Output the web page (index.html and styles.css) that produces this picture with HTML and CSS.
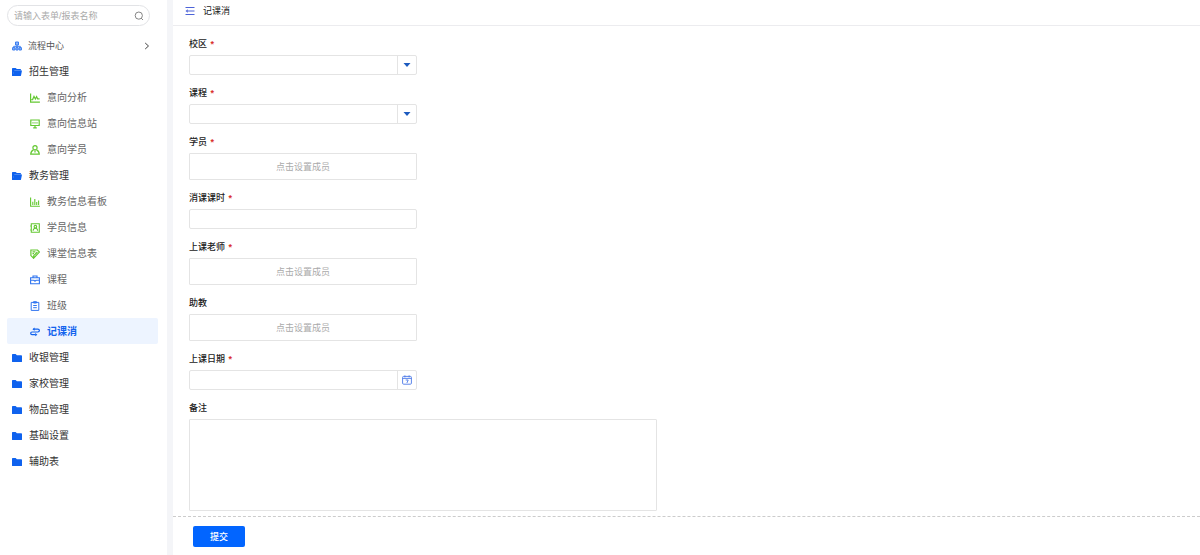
FILE: index.html
```html
<!DOCTYPE html>
<html lang="zh-CN">
<head>
	<meta charset="UTF-8">
	<meta name="viewport" content="width=device-width, initial-scale=1.0">
	<title>记课消</title>
	<link rel="stylesheet" href="styles.css">
</head>
<body>
	<!-- shared folder shapes -->
	<svg class="sprite" aria-hidden="true">
		<symbol id="folder" viewBox="0 0 10 9">
			<path d="M0 1.2Q0 .5.7.5H3.6L4.9 1.8H9.2Q10 1.8 10 2.5V7.9Q10 8.6 9.3 8.6H.7Q0 8.6 0 7.9Z" fill="#0f62ee"/>
		</symbol>
		<symbol id="folder-open" viewBox="0 0 10 9">
			<path d="M0 1.2Q0 .5.7.5H3.6L4.9 1.6H8.3Q9 1.6 9 2.3V3H2.4L1 7.6 1.5 8.6H.7Q0 8.6 0 7.9Z" fill="#0f62ee"/>
			<path d="M2.1 2.9H10L9 8Q8.9 8.6 8.3 8.6H.5Z" fill="#0f62ee"/>
		</symbol>
	</svg>

	<aside class="sidebar">
		<form class="search" role="search">
			<input class="search-input" type="search" aria-label="搜索表单" placeholder="请输入表单/报表名称">
			<button class="search-btn" type="submit" aria-label="搜索">
				<svg class="icon" viewBox="0 0 10 10" fill="none" stroke="#777" stroke-width=".9"><circle cx="4.8" cy="4.6" r="3.6"/><path d="M7.2 7.2L9 9"/></svg>
			</button>
		</form>

		<nav class="menu">
			<a class="menu-item center" href="#flow">
				<svg class="icon" viewBox="0 0 10 10" fill="#8db6f7" stroke="#3a7df0" stroke-width="1"><path d="M3.5 1H6.5V4H3.5ZM.6 6.6H2.9V9H.6ZM3.9 6.6H6.1V9H3.9ZM7.1 6.6H9.4V9H7.1Z"/><path d="M5 4V6.6M1.7 6.6V5.3H8.3V6.6" fill="none"/></svg>
				<span>流程中心</span>
				<svg class="arrow" viewBox="0 0 6 8" fill="none" stroke="#444" stroke-width="1"><path d="M1.2 1L4.5 4 1.2 7"/></svg>
			</a>
			<a class="menu-item" href="#recruit"><svg class="icon"><use href="#folder-open"/></svg><span>招生管理</span></a>
			<ul class="submenu">
				<li><a class="menu-item" href="#analysis">
					<svg class="icon" viewBox="0 0 10 10" fill="none" stroke="#64c832" stroke-width="1.2"><path d="M.6.5V9.2H9.9M1.4 6.6H2.6L4 3.4 5.4 6 6.6 3.6 7.6 5.8H9.6"/></svg>
					<span>意向分析</span></a></li>
				<li><a class="menu-item" href="#station">
					<svg class="icon" viewBox="0 0 10 10" fill="none" stroke="#64c832" stroke-width="1.2"><path d="M.8 1H9.2V6.5H.8ZM3 3.2V4.4M5 3.2V4.4M7 3.2V4.4M5 6.5V8.8M3.2 8.8H6.8"/></svg>
					<span>意向信息站</span></a></li>
				<li><a class="menu-item" href="#leads">
					<svg class="icon" viewBox="0 0 10 10" fill="none" stroke="#64c832" stroke-width="1.2"><circle cx="5" cy="2.7" r="2.1"/><path d="M3.6 4.6Q.9 6 .7 9.2H9.3Q9.1 6 6.4 4.6M5 5.3V7.4"/></svg>
					<span>意向学员</span></a></li>
			</ul>
			<a class="menu-item" href="#academic"><svg class="icon"><use href="#folder-open"/></svg><span>教务管理</span></a>
			<ul class="submenu">
				<li><a class="menu-item" href="#board">
					<svg class="icon" viewBox="0 0 10 10" fill="none" stroke="#64c832" stroke-width="1.1"><path d="M.6.5V9.2H9.9M2.8 4.8V8M4.8 2V8M6.7 5V8M8.6 3.6V8"/></svg>
					<span>教务信息看板</span></a></li>
				<li><a class="menu-item" href="#students">
					<svg class="icon" viewBox="0 0 10 10" fill="none" stroke="#64c832" stroke-width="1.1"><path d="M1.3.7H9.3V9.3H1.3ZM.2 3H1.8M.2 7H1.8"/><circle cx="5.4" cy="3.7" r="1.3"/><path d="M3.1 7.8Q3.4 5.3 5.4 5.3T7.7 7.8"/></svg>
					<span>学员信息</span></a></li>
				<li><a class="menu-item" href="#classroom">
					<svg class="icon" viewBox="0 0 10 10" fill="none" stroke="#64c832" stroke-width="1.2"><path d="M3.4 9L.9 6.6V1H7.5L9.4 3.1 3.7 9.1V6.7L7.4 3M2.5 2.9H5.4M2.5 4.7H4"/></svg>
					<span>课堂信息表</span></a></li>
				<li><a class="menu-item" href="#course">
					<svg class="icon" viewBox="0 0 10 10" fill="none" stroke="#2f74f0" stroke-width="1.1"><path d="M.6 2.7H9.4V8.8H.6ZM3 2.7V1H7V2.7M.6 5.2H3.8M6.2 5.2H9.4M3.8 5.2L5 6.2 6.2 5.2"/></svg>
					<span>课程</span></a></li>
				<li><a class="menu-item" href="#class">
					<svg class="icon" viewBox="0 0 10 10" fill="none" stroke="#2f74f0" stroke-width="1"><path d="M1.2 1.4H8.8V9.4H1.2ZM3.5.7H6.5V2H3.5ZM3.2 4.5H6.8M3.2 6.7H6.8"/></svg>
					<span>班级</span></a></li>
				<li><a class="menu-item active" href="#record" aria-current="page">
					<svg class="icon" viewBox="0 0 10 10" fill="none" stroke="#1263ee" stroke-width="1.2"><path d="M3.6 2.2H7.8Q9.4 2.2 9.4 3.6T7.8 5H2Q.7 5 .7 6.3T2 7.7H5.4"/><path d="M4.6.6V3.8L2.4 2.2ZM5.2 6.1V9.3L7.4 7.7Z" fill="#1263ee" stroke="none"/></svg>
					<span>记课消</span></a></li>
			</ul>
			<a class="menu-item" href="#cashier"><svg class="icon"><use href="#folder"/></svg><span>收银管理</span></a>
			<a class="menu-item" href="#family"><svg class="icon"><use href="#folder"/></svg><span>家校管理</span></a>
			<a class="menu-item" href="#goods"><svg class="icon"><use href="#folder"/></svg><span>物品管理</span></a>
			<a class="menu-item" href="#settings"><svg class="icon"><use href="#folder"/></svg><span>基础设置</span></a>
			<a class="menu-item" href="#aux"><svg class="icon"><use href="#folder"/></svg><span>辅助表</span></a>
		</nav>
	</aside>

	<main class="main">
		<header class="header">
			<button class="collapse" type="button" aria-label="收起菜单">
				<svg class="icon" viewBox="0 0 10 10" fill="none" stroke="#4c63d8" stroke-width="1"><path d="M.5 1.5H9.5M3 5H9.5M.5 8.5H9.5"/><path d="M2.8 3.3V6.7L.5 5Z" fill="#4c63d8" stroke="none"/></svg>
			</button>
			<h1 class="title">记课消</h1>
		</header>

		<form class="form" id="recordForm">
			<div class="field">
				<label for="campus">校区 <span class="required">*</span></label>
				<div class="control">
					<select id="campus"><option></option></select>
					<span class="addon"><svg class="caret" viewBox="0 0 8 4"><path d="M.5 0H7.5L4 4Z" fill="#1d5bbf"/></svg></span>
				</div>
			</div>
			<div class="field">
				<label for="course">课程 <span class="required">*</span></label>
				<div class="control">
					<select id="course"><option></option></select>
					<span class="addon"><svg class="caret" viewBox="0 0 8 4"><path d="M.5 0H7.5L4 4Z" fill="#1d5bbf"/></svg></span>
				</div>
			</div>
			<div class="field">
				<label for="student">学员 <span class="required">*</span></label>
				<button class="member" id="student" type="button">点击设置成员</button>
			</div>
			<div class="field">
				<label for="hours">消课课时 <span class="required">*</span></label>
				<div class="control"><input id="hours" type="text"></div>
			</div>
			<div class="field">
				<label for="teacher">上课老师 <span class="required">*</span></label>
				<button class="member" id="teacher" type="button">点击设置成员</button>
			</div>
			<div class="field">
				<label for="assistant">助教</label>
				<button class="member" id="assistant" type="button">点击设置成员</button>
			</div>
			<div class="field">
				<label for="date">上课日期 <span class="required">*</span></label>
				<div class="control">
					<input id="date" type="text">
					<span class="addon"><svg class="icon" viewBox="0 0 10 10" fill="none" stroke="#4b78e8" stroke-width=".9"><rect x=".6" y="1.4" width="8.8" height="7.8" rx="1"/><path d="M.6 3.4H9.4M2.9.4V2.4M7.1.4V2.4M3.7 5H6.2L4.9 8"/></svg></span>
				</div>
			</div>
			<div class="field wide">
				<label for="remark">备注</label>
				<textarea id="remark"></textarea>
			</div>
		</form>

		<footer class="footer">
			<button class="submit" type="submit" form="recordForm">提交</button>
		</footer>
	</main>
</body>
</html>
```
FILE: styles.css
```css
* { margin: 0; padding: 0; box-sizing: border-box; }
body {
	display: flex;
	min-height: 100vh;
	background: #f4f5f8;
	color: #222;
	font-family: "Liberation Sans", "Noto Sans CJK SC", sans-serif;
	font-size: 9px;
	line-height: 16px;
}
input, select, textarea, button {
	font: inherit;
	color: inherit;
	border: none;
	background: none;
	outline: none;
}
button { cursor: pointer; }
ul { list-style: none; }
svg { display: block; }
.sprite {
	position: absolute;
	width: 0;
	height: 0;
}
.icon {
	width: 10px;
	height: 10px;
	flex: none;
}

/* sidebar */
.sidebar {
	flex: none;
	width: 167px;
	padding: 5px 9px 0 7px;
	background: #fff;
}
.search {
	display: flex;
	align-items: center;
	height: 21px;
	margin: 0 8px 6px 0;
	padding: 0 5px 0 6px;
	border: 1px solid #e2e3e6;
	border-radius: 11px;
}
.search-input {
	flex: 1;
	min-width: 0;
	appearance: none;
}
::placeholder { color: #aaa; }
.menu-item {
	display: flex;
	align-items: center;
	gap: 7px;
	height: 26px;
	padding: 2px 0 0 5px;
	border-radius: 2px;
	color: #333;
	font-size: 10px;
	text-decoration: none;
}
.menu-item.center {
	gap: 6px;
	color: #555;
	font-size: 9px;
}
.arrow {
	width: 6px;
	height: 8px;
	margin: 0 8px 0 auto;
}
.submenu .menu-item {
	padding-left: 23px;
	color: #666;
}
.submenu .menu-item.active {
	background: #edf4ff;
	color: #1263ee;
	font-weight: 600;
}

/* main */
.main {
	display: flex;
	flex: 1;
	flex-direction: column;
	min-width: 0;
	margin-left: 6px;
	background: #fff;
}
.header {
	display: flex;
	align-items: center;
	gap: 8px;
	padding: 3px 12px 6px;
	border-bottom: 1px solid #ececef;
}
.title {
	font-size: 9px;
	font-weight: 400;
}
.form {
	display: flex;
	flex: 1;
	flex-direction: column;
	gap: 10px;
	padding: 10px 16px 5px;
}
.field {
	display: flex;
	flex-direction: column;
	gap: 3px;
	max-width: 228px;
}
.field.wide { max-width: 468px; }
.field label { font-weight: 500; }
.required {
	margin-left: 1px;
	color: #d9302c;
	font-weight: 700;
}
.control {
	display: grid;
	grid-template-columns: 1fr 19px;
	height: 20px;
	border: 1px solid #e4e4e4;
	border-radius: 2px;
}
.control select,
.control input {
	grid-area: 1 / 1 / 2 / 3;
	min-width: 0;
	padding: 0 6px;
	appearance: none;
}
.addon {
	display: grid;
	grid-area: 1 / 2;
	place-items: center;
	border-left: 1px solid #e4e4e4;
	pointer-events: none;
}
.caret {
	width: 8px;
	height: 4px;
}
.member {
	height: 27px;
	border: 1px solid #e4e4e4;
	border-radius: 1px;
	color: #aaa;
}
textarea {
	height: 92px;
	padding: 4px 6px;
	border: 1px solid #e4e4e4;
	border-radius: 1px;
	resize: none;
}
.footer {
	padding: 9px 20px 8px;
	border-top: 1px dashed #ccc;
}
.submit {
	width: 52px;
	height: 21px;
	border-radius: 2px;
	background: #0265ff;
	color: #fff;
	font-weight: 500;
}
```
